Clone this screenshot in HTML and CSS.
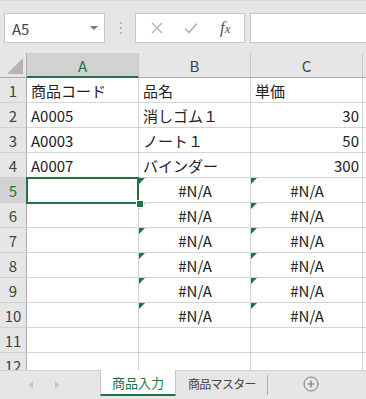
FILE: index.html
```html
<!DOCTYPE html>
<html lang="ja">
<head>
  <meta charset="UTF-8">
  <title>商品入力</title>
  <link rel="stylesheet" href="styles.css">
</head>
<body>
  <div class="app">
    <div class="formula-bar">
      <div class="name-box">
        <span>A5</span>
        <span class="caret"></span>
      </div>
      <div class="grip"><i></i><i></i><i></i></div>
      <div class="fx-buttons">
        <svg class="btn-x" width="12" height="12" viewBox="0 0 12 12"><path d="M1 1 L11 11 M11 1 L1 11" stroke="#b4b4b4" stroke-width="1.4" fill="none"/></svg>
        <svg class="btn-ok" width="14" height="12" viewBox="0 0 14 12"><path d="M1 6.5 L5 10.5 L13 1.5" stroke="#b4b4b4" stroke-width="1.6" fill="none"/></svg>
        <span class="fx">f<span>x</span></span>
      </div>
      <div class="formula-input"></div>
    </div>

    <div class="sheet">
      <div class="corner"><span class="corner-tri"></span></div>
      <div class="col-head active">A</div>
      <div class="col-head">B</div>
      <div class="col-head">C</div>
      <div class="col-head"></div>

      <div class="row-head">1</div>
      <div class="cell">商品コード</div>
      <div class="cell">品名</div>
      <div class="cell">単価</div>
      <div class="cell"></div>

      <div class="row-head">2</div>
      <div class="cell">A0005</div>
      <div class="cell">消しゴム１</div>
      <div class="cell num">30</div>
      <div class="cell"></div>

      <div class="row-head">3</div>
      <div class="cell">A0003</div>
      <div class="cell">ノート１</div>
      <div class="cell num">50</div>
      <div class="cell"></div>

      <div class="row-head">4</div>
      <div class="cell">A0007</div>
      <div class="cell">バインダー</div>
      <div class="cell num">300</div>
      <div class="cell"></div>

      <div class="row-head active">5</div>
      <div class="cell selected"><span class="sel-box"></span><span class="fill-handle"></span></div>
      <div class="cell err">#N/A</div>
      <div class="cell err">#N/A</div>
      <div class="cell"></div>

      <div class="row-head">6</div>
      <div class="cell"></div>
      <div class="cell err">#N/A</div>
      <div class="cell err">#N/A</div>
      <div class="cell"></div>

      <div class="row-head">7</div>
      <div class="cell"></div>
      <div class="cell err">#N/A</div>
      <div class="cell err">#N/A</div>
      <div class="cell"></div>

      <div class="row-head">8</div>
      <div class="cell"></div>
      <div class="cell err">#N/A</div>
      <div class="cell err">#N/A</div>
      <div class="cell"></div>

      <div class="row-head">9</div>
      <div class="cell"></div>
      <div class="cell err">#N/A</div>
      <div class="cell err">#N/A</div>
      <div class="cell"></div>

      <div class="row-head">10</div>
      <div class="cell"></div>
      <div class="cell err">#N/A</div>
      <div class="cell err">#N/A</div>
      <div class="cell"></div>

      <div class="row-head">11</div>
      <div class="cell"></div>
      <div class="cell"></div>
      <div class="cell"></div>
      <div class="cell"></div>

      <div class="row-head">12</div>
      <div class="cell"></div>
      <div class="cell"></div>
      <div class="cell"></div>
      <div class="cell"></div>
    </div>

    <div class="tabs">
      <div class="tab-nav">
        <span class="arrow left"></span>
        <span class="arrow right"></span>
      </div>
      <div class="tab active">商品入力</div>
      <div class="tab master">商品マスター</div>
      <div class="tab-sep"></div>
      <div class="add-sheet">
        <svg width="16" height="16" viewBox="0 0 16 16"><circle cx="8" cy="8" r="7" stroke="#7a7a7a" stroke-width="1" fill="none"/><path d="M8 4.5 V11.5 M4.5 8 H11.5" stroke="#7a7a7a" stroke-width="1.2"/></svg>
      </div>
    </div>
  </div>
</body>
</html>
```

FILE: styles.css
```css
body {
  margin: 0;
  font-family: "Noto Sans CJK JP", "Noto Sans", sans-serif;
  color: #222;
  background: #fff;
}
.app {
  width: 366px;
  height: 399px;
  overflow: hidden;
  display: flex;
  flex-direction: column;
}

/* formula bar */
.formula-bar {
  height: 53px;
  flex: none;
  box-sizing: border-box;
  background: #e6e6e6;
  border-top: 1px solid #d8d8d8;
  padding-top: 12px;
  display: flex;
  align-items: flex-start;
}
.name-box {
  width: 101px;
  height: 30px;
  margin-left: 4px;
  box-sizing: border-box;
  background: #fff;
  border: 1px solid #c6c6c6;
  display: flex;
  align-items: center;
  justify-content: space-between;
  padding: 0 6px 0 7px;
  font-size: 15px;
  color: #444;
}
.caret {
  width: 0;
  height: 0;
  border-left: 4px solid transparent;
  border-right: 4px solid transparent;
  border-top: 4px solid #777;
}
.grip {
  margin-left: 15px;
  height: 30px;
  display: flex;
  flex-direction: column;
  justify-content: center;
  gap: 3px;
}
.grip i {
  width: 2px;
  height: 2px;
  background: #b8b8b8;
}
.fx-buttons {
  width: 110px;
  height: 30px;
  margin-left: 13px;
  box-sizing: border-box;
  background: #fff;
  border: 1px solid #c6c6c6;
  display: flex;
  align-items: center;
  padding-left: 15px;
}
.btn-ok {
  margin-left: 21px;
}
.fx {
  margin-left: 22px;
  font-family: "Liberation Serif", serif;
  font-style: italic;
  font-size: 17px;
  color: #555;
}
.fx span {
  font-size: 13px;
}
.formula-input {
  flex: 1;
  height: 30px;
  margin-left: 5px;
  margin-right: -2px;
  box-sizing: border-box;
  background: #fff;
  border: 1px solid #c6c6c6;
}

/* grid */
.sheet {
  height: 317px;
  flex: none;
  overflow: hidden;
  display: grid;
  grid-template-columns: 27px 112px 112px 112px 1fr;
  grid-auto-rows: 25px;
  font-size: 15px;
}
.sheet > div {
  box-sizing: border-box;
  display: flex;
  align-items: center;
  white-space: nowrap;
}
.corner {
  background: #e6e6e6;
  border-right: 1px solid #ababab;
  border-bottom: 1px solid #ababab;
  justify-content: flex-end;
  align-items: flex-end !important;
  padding: 0 3px 3px 0;
}
.corner-tri {
  width: 16px;
  height: 16px;
  background: #b5b5b5;
  clip-path: polygon(100% 0, 100% 100%, 0 100%);
}
.col-head {
  background: #e6e6e6;
  color: #444;
  justify-content: center;
  border-right: 1px solid #c6c6c6;
  border-bottom: 1px solid #ababab;
}
.col-head.active {
  background: #d2d2d2;
  color: #217346;
  border-bottom: 2px solid #217346;
  padding-top: 1px;
}
.row-head {
  background: #e6e6e6;
  color: #444;
  justify-content: center;
  border-right: 1px solid #ababab;
  border-bottom: 1px solid #d0d0d0;
}
.row-head.active {
  background: #d2d2d2;
  color: #217346;
}
.cell {
  position: relative;
  padding: 0 3px 0 4px;
  border-right: 1px solid #d4d4d4;
  border-bottom: 1px solid #d4d4d4;
  color: #222;
}
.cell.num {
  justify-content: flex-end;
}
.cell.err {
  justify-content: center;
}
.cell.err::before {
  content: "";
  position: absolute;
  top: 0;
  left: 0;
  border-top: 6px solid #217346;
  border-right: 6px solid transparent;
}
.cell.selected {
  z-index: 2;
}
.sel-box {
  position: absolute;
  top: -1px;
  left: -1px;
  right: -1px;
  bottom: -2px;
  border: 2px solid #217346;
}
.fill-handle {
  position: absolute;
  left: 109px;
  top: 22px;
  width: 6px;
  height: 6px;
  background: #217346;
  border: 1px solid #fff;
}

/* sheet tabs */
.tabs {
  flex: 1;
  background: #e6e6e6;
  border-top: 1px solid #d0d0d0;
  display: flex;
  align-items: flex-start;
  font-size: 13px;
}
.tab-nav {
  width: 100px;
  height: 28px;
  display: flex;
  align-items: center;
  padding-left: 29px;
  box-sizing: border-box;
  gap: 22px;
}
.arrow {
  width: 0;
  height: 0;
  border-top: 4px solid transparent;
  border-bottom: 4px solid transparent;
}
.arrow.left {
  border-right: 4px solid #c4c4c4;
}
.arrow.right {
  border-left: 4px solid #c4c4c4;
}
.tab {
  height: 25px;
  box-sizing: border-box;
  display: flex;
  align-items: center;
  padding: 0 12px;
  color: #444;
}
.tab.master {
  font-size: 12px;
  letter-spacing: -0.7px;
  padding: 0 11px 0 12px;
}
.tab.active {
  width: 76px;
  margin-top: -1px;
  height: 26px;
  background: #fff;
  color: #217346;
  border-bottom: 2px solid #217346;
  border-left: 1px solid #c6c6c6;
  border-right: 1px solid #c6c6c6;
  justify-content: center;
  padding: 0;
}
.tab-sep {
  width: 1px;
  height: 20px;
  margin-top: 4px;
  background: #ababab;
}
.add-sheet {
  margin-left: 35px;
  height: 26px;
  display: flex;
  align-items: center;
}
```
